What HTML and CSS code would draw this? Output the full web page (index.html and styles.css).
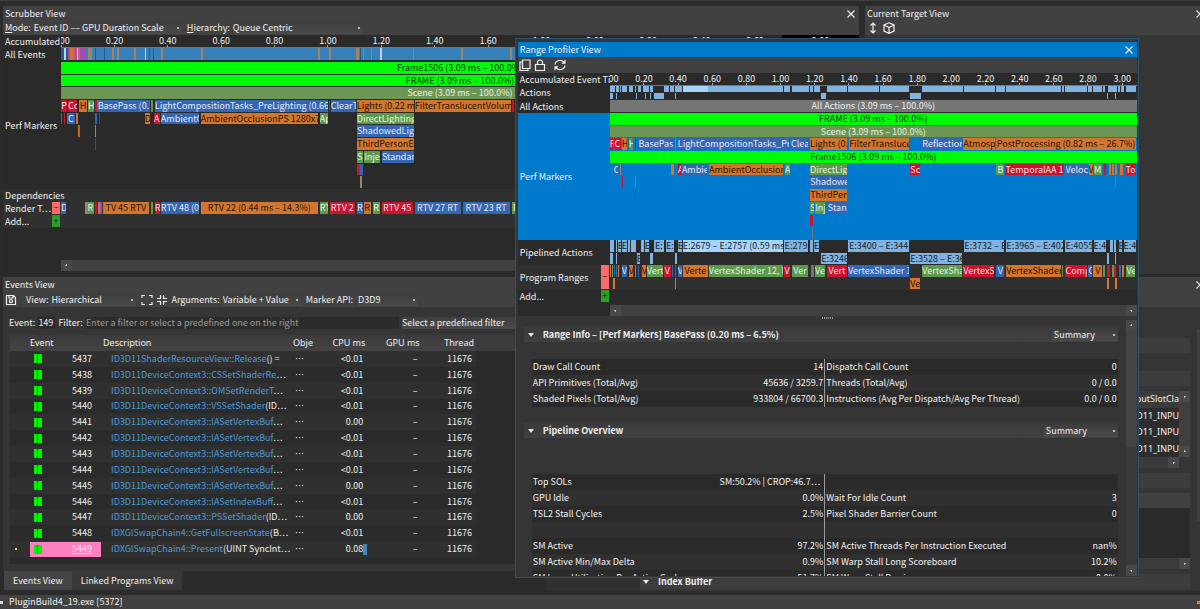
FILE: index.html
```html
<!DOCTYPE html>
<html lang="en">
  <head>
    <meta charset="UTF-8" />
    <meta name="viewport" content="width=device-width, initial-scale=1.0" />
    <title>PluginBuild4_19.exe [5372]</title>
    <link rel="stylesheet" href="styles.css">
  </head>
  <body>
    <main class="workspace">
      <div class="dock dock-top">
        <section class="panel scrubber">
          <header class="panel-head">
            <div class="panel-title">
              <h2>Scrubber View</h2>
              <button class="close" aria-label="Close Scrubber View"><svg viewBox="0 0 8 8"><path d="M.5.5l7 7M7.5.5l-7 7" /></svg></button>
            </div>
            <div class="toolbar">
              <label for="mode"><u>M</u>ode:</label>
              <select id="mode" class="w-mode"><option>Event ID –– GPU Duration Scale</option></select>
              <label for="hierarchy"><u>H</u>ierarchy:</label>
              <select id="hierarchy" class="w-hierarchy"><option>Queue Centric</option></select>
            </div>
          </header>
          <div class="lane ruler-lane">
            <span class="lane-label">Accumulated D</span>
            <div class="ruler" id="scrubRuler"></div>
          </div>
          <div class="lane all-events">
            <span class="lane-label">All Events</span>
            <div class="track" id="allEvents"></div>
          </div>
          <div class="lane perf">
            <span class="lane-label">Perf Markers</span>
            <div class="track" id="scrubPerf"></div>
          </div>
          <div class="lane lane-alt"><span class="lane-label wide">Dependencies</span></div>
          <div class="lane lane-alt">
            <span class="lane-label">Render T⋯</span>
            <button class="remove" aria-label="Remove row">−</button>
            <div class="track" id="renderTargets"></div>
          </div>
          <div class="lane lane-alt">
            <span class="lane-label">Add...</span>
            <button class="add" aria-label="Add row">+</button>
            <div class="track"></div>
          </div>
          <div class="hscroll"><i></i></div>
        </section>

        <section class="panel target">
          <header class="panel-head">
            <div class="panel-title">
              <h2>Current Target View</h2>
              <button class="close cut" aria-label="Close Current Target View"><svg viewBox="0 0 8 8"><path d="M.5.5l7 7M7.5.5l-7 7" /></svg></button>
            </div>
            <div class="toolbar icons">
              <svg class="icon" viewBox="0 0 12 12"><path d="M6 1v10M3.500 3.500L6 1l2.500 2.500M3.500 8.500L6 11l2.500-2.500" /></svg>
              <svg class="icon" viewBox="0 0 12 12"><path d="M6 .8l5 2.200v6L6 11.300 1 9V3zM1 3l5 2.500L11 3M6 5.500v5.800" /></svg>
            </div>
          </header>
        </section>
      </div>

      <div class="dock dock-bottom">
        <div class="events-side">
          <section class="panel events">
            <header class="panel-head">
              <div class="panel-title"><h2>Events View</h2></div>
              <div class="toolbar">
                <svg class="icon" viewBox="0 0 12 12"><path d="M1.500 1.500h7l2 2v7h-9zM4 1.500v2.500h4V2M6 5.500a1.500 1.500 0 1 1 0 3.200a1.500 1.500 0 1 1 0-3.200" /></svg>
                <label for="view" class="indent">View:</label>
                <select id="view" class="w-view"><option>Hierarchical</option></select>
                <svg class="icon" viewBox="0 0 12 12"><path d="M1 4V1.500h3M8 1.500h3V4M11 8v2.500H8M4 10.500H1V8" /></svg>
                <svg class="icon" viewBox="0 0 12 12"><path d="M1 4.500h3.500V1M7.500 1v3.500H11M11 7.500H7.500V11M4.500 11V7.500H1" /></svg>
                <label for="args">Arguments:</label>
                <select id="args" class="w-args"><option>Variable + Value</option></select>
                <label for="api">Marker API:</label>
                <select id="api" class="w-api"><option>D3D9</option></select>
              </div>
            </header>
            <div class="filter-bar">
              <label for="eventNo">Event:</label>
              <input id="eventNo" class="event-no" value="149" />
              <label for="filter">Filter:</label>
              <input id="filter" class="filter" placeholder="Enter a filter or select a predefined one on the right" />
              <select class="w-filter" aria-label="Predefined filter"><option>Select a predefined filter</option></select>
            </div>
            <div class="event-list">
              <table class="event-table">
                <thead>
                  <tr>
                    <th class="c-mark"></th>
                    <th class="c-event">Event</th>
                    <th class="c-desc">Description</th>
                    <th class="c-obj">Obje</th>
                    <th class="c-num">CPU ms</th>
                    <th class="c-num">GPU ms</th>
                    <th class="c-num">Thread</th>
                  </tr>
                </thead>
                <tbody id="eventRows"></tbody>
              </table>
            </div>
          </section>
          <nav class="tabs">
            <button class="tab active">Events View</button>
            <button class="tab">Linked Programs View</button>
          </nav>
        </div>

        <section class="panel inspector">
          <header class="panel-head">
            <div class="panel-title">
              <h2></h2>
              <button class="close cut" aria-label="Close API Inspector"><svg viewBox="0 0 8 8"><path d="M.5.5l7 7M7.5.5l-7 7" /></svg></button>
            </div>
          </header>
          <div class="inspector-body">
            <div class="stage-list"></div>
            <div class="stage">
              <div class="group"></div>
              <div class="group"></div>
              <div class="layout-box">
                <table class="slots">
                  <tr><th>InputSlotCla</th></tr>
                  <tr><td>D3D11_INPU</td></tr>
                  <tr><td>D3D11_INPU</td></tr>
                  <tr><td>D3D11_INPU</td></tr>
                </table>
                <div class="vscroll ends"><i></i><i></i></div>
              </div>
              <div class="hscroll-mini"></div>
              <div class="group"></div>
              <div class="buffer-head"></div>
              <div class="buffer-body"></div>
              <div class="hscroll-mini full"></div>
              <button class="group index-buffer"><i class="caret"></i>Index Buffer</button>
            </div>
            <div class="vscroll outer"></div>
          </div>
        </section>
      </div>
    </main>

    <footer class="status">
      <i class="status-dot"></i>
      <span>PluginBuild4_19.exe [5372]</span>
      <i class="status-warn"></i>
    </footer>

    <section class="window">
      <header class="window-title">
        <h2>Range Profiler View</h2>
        <button class="close" aria-label="Close Range Profiler View"><svg viewBox="0 0 8 8"><path d="M.5.5l7 7M7.5.5l-7 7" /></svg></button>
      </header>
      <div class="window-tools">
        <svg class="icon" viewBox="0 0 12 12"><path d="M3.500 1h7.500v8.500H3.500zM3.500 3H1v8.500h8V9.500" /></svg>
        <svg class="icon" viewBox="0 0 12 12"><path d="M1.500 5.500h9v6h-9zM3.500 5.500V3.500a2.500 2.500 0 0 1 5 0v2" /></svg>
        <svg class="icon gap" viewBox="0 0 12 12"><path d="M1 5.500a5 4.500 0 0 1 9.500-1.500M11 1v3.200H7.800M11 6.500A5 4.500 0 0 1 1.500 8M1 11V7.800h3.200" /></svg>
      </div>
      <div class="profile">
        <div class="lane ruler-lane">
          <span class="lane-label">Accumulated Event Ti</span>
          <div class="ruler" id="rangeRuler"></div>
        </div>
        <div class="lane actions">
          <span class="lane-label">Actions</span>
          <div class="track" id="actions"></div>
        </div>
        <div class="lane">
          <span class="lane-label">All Actions</span>
          <div class="track" id="allActions"></div>
        </div>
        <div class="lane perf selected">
          <span class="lane-label">Perf Markers</span>
          <div class="track" id="rangePerf"></div>
        </div>
        <div class="lane double">
          <span class="lane-label">Pipelined Actions</span>
          <div class="track" id="pipelined"></div>
        </div>
        <div class="lane double lane-alt">
          <span class="lane-label">Program Ranges</span>
          <button class="remove" aria-label="Remove row">−</button>
          <div class="track" id="programs"></div>
        </div>
        <div class="lane">
          <span class="lane-label">Add...</span>
          <button class="add" aria-label="Add row">+</button>
          <div class="track"></div>
        </div>
        <div class="hscroll"><i></i><i></i></div>
      </div>
      <div class="splitter"></div>
      <div class="details">
        <div class="details-body">
          <div class="section-head">
            <button class="fold"><i class="caret"></i>Range Info – [Perf Markers] BasePass (0.20 ms – 6.5%)</button>
            <select class="w-range" aria-label="Range info view"><option>Summary</option></select>
          </div>
          <table class="metrics">
            <tr><td>Draw Call Count</td><td>14</td><td>Dispatch Call Count</td><td>0</td></tr>
            <tr><td>API Primitives (Total/Avg)</td><td>45636 / 3259.7</td><td>Threads (Total/Avg)</td><td>0 / 0.0</td></tr>
            <tr><td>Shaded Pixels (Total/Avg)</td><td>933804 / 66700.3</td><td>Instructions (Avg Per Dispatch/Avg Per Thread)</td><td>0.0 / 0.0</td></tr>
          </table>
          <div class="section-head">
            <button class="fold"><i class="caret"></i>Pipeline Overview</button>
            <select class="w-pipeline" aria-label="Pipeline overview view"><option>Summary</option></select>
          </div>
          <table class="metrics pipeline">
            <tr><td>Top SOLs</td><td class="more">SM:50.2% | CROP:46.7⋯</td><td></td><td></td></tr>
            <tr><td>GPU Idle</td><td>0.0%</td><td>Wait For Idle Count</td><td>3</td></tr>
            <tr><td>TSL2 Stall Cycles</td><td>2.5%</td><td>Pixel Shader Barrier Count</td><td>0</td></tr>
            <tr><td></td><td></td><td></td><td></td></tr>
            <tr><td>SM Active</td><td>97.2%</td><td>SM Active Threads Per Instruction Executed</td><td>nan%</td></tr>
            <tr><td>SM Active Min/Max Delta</td><td>0.9%</td><td>SM Warp Stall Long Scoreboard</td><td>10.2%</td></tr>
            <tr><td>SM Issue Utilization Per Active Cycle</td><td>51.7%</td><td>SM Warp Stall Barrier</td><td>0.0%</td></tr>
          </table>
        </div>
        <div class="vscroll window-scroll ends"><i></i><i></i></div>
      </div>
    </section>

    <script src="script.js"></script>
  </body>
</html>
```
FILE: styles.css
```css
* {
  box-sizing: border-box;
}

body {
  margin: 0;
  height: 100vh;
  display: flex;
  flex-direction: column;
  position: relative;
  overflow: hidden;
  background: #2b2b2b;
  color: #f0f0f0;
  font: 9px/12px "Noto Sans CJK JP", sans-serif;
  white-space: nowrap;
}

h2 {
  margin: 0;
  font-size: 9px;
  font-weight: normal;
}

button,
input,
select {
  margin: 0;
  padding: 0;
  border: 0;
  border-radius: 0;
  background: none;
  color: inherit;
  font: inherit;
}

select {
  appearance: none;
  height: 12px;
  padding: 0;
  background: radial-gradient(#bbb 1px, transparent 1px) right 2px center / 4px 4px no-repeat,
    linear-gradient(#3e3e3e, #4a4a4a);
}

svg {
  display: block;
  fill: none;
  stroke: #f0f0f0;
  stroke-width: 1.2;
}

.icon {
  width: 12px;
  height: 12px;
  flex: none;
}

.close svg {
  width: 8px;
  height: 8px;
}

.workspace {
  flex: 1;
  min-height: 0;
  display: flex;
  flex-direction: column;
  gap: 3px;
  padding: 5px 0 0 3px;
  border-top: 1px solid #3e3e3e;
}

.dock {
  display: flex;
}

.dock-top {
  height: 268px;
  gap: 6px;
}

.dock-bottom {
  flex: 1;
  min-height: 0;
  gap: 6px;
}

.panel {
  min-width: 0;
  background: #353535;
}

.panel-head {
  flex: none;
  background: #414141;
  height: 30px;
}

.dock-top .panel-head {
  height: 29px;
}

.panel-title {
  display: flex;
  justify-content: space-between;
  align-items: center;
  height: 15px;
  padding: 0 4px 0 2px;
}

.close.cut {
  margin-right: -8px;
}

.toolbar {
  display: flex;
  align-items: center;
  height: 14px;
  padding-left: 2px;
  gap: 3px;
}

.scrubber {
  flex: 856;
  display: flex;
  flex-direction: column;
  background: #2a2a2a;
}

.target {
  flex: 335;
  overflow: hidden;
}

.target .toolbar {
  gap: 4px;
}

.w-mode {
  width: 148px;
  margin-right: 2px;
}

.w-hierarchy {
  width: 130px;
}

/* timelines */
.lane {
  display: flex;
  align-items: stretch;
  height: 13px;
}

.lane-label {
  width: 58px;
  flex: none;
  padding-left: 2px;
  align-self: center;
  overflow: hidden;
}

.lane-label.wide {
  width: auto;
}

.lane-alt {
  background: #303030;
}

.lane .remove,
.lane .add {
  width: 8px;
  flex: none;
  margin: 0 1px 1px -9px;
  line-height: 10px;
  color: #1c1c1c;
}

.lane .remove {
  background: #ff6b6b;
}

.lane .add {
  background: #2aa02a;
}

.track {
  flex: 1;
  min-width: 0;
  display: grid;
  grid-auto-rows: 1fr;
}

.row {
  display: flex;
  min-width: 0;
  overflow: hidden;
  padding-bottom: 1px;
}

.bar {
  flex: none;
  overflow: hidden;
  text-align: center;
  line-height: 12px;
}

.red { background: #cb1530; color: #f6dfe2; }
.blue { background: #3566b3; color: #e2e9f5; }
.orange { background: #d3752d; color: #2a1608; }
.green { background: #5c994d; color: #e6f2e2; }
.lime { background: #00fb06; color: #063c06; }
.scene { background: #6b9653; color: #eef3ea; }
.gray { background: #757575; color: #f0f0f0; }
.sky { background: #80b3e0; color: #152433; }
.light { background: #a8d4fa; color: #152433; }
.steel { background: #3880ba; }
.tan { background: #a08463; }
.pink { background: #d05a70; }
.violet { background: #a24bb5; }
.white { background: #b8d3ea; }
.navy { background: #275b87; }

.ruler {
  flex: 1;
  min-width: 0;
  display: flex;
  overflow: hidden;
  border-bottom: 1px solid #777;
}

.tick {
  flex: none;
  text-align: center;
  line-height: 12px;
  background: linear-gradient(#aaa, #aaa) center bottom / 1px 2px no-repeat;
}

.tick.cursor {
  flex: 1;
  background: #000;
}

.all-events {
  height: 14px;
  padding-bottom: 1px;
}

.scrubber .perf,
.profile .perf {
  height: 127px;
}

.hscroll {
  height: 11px;
  margin: auto 0 3px 58px;
  display: flex;
  justify-content: space-between;
  background: #404040;
}

.hscroll i,
.vscroll i {
  width: 11px;
  height: 11px;
  background: radial-gradient(#bbb 1px, #484848 1px);
}

/* events */
.events-side {
  flex: 537;
  min-width: 0;
  display: flex;
  flex-direction: column;
}

.events {
  flex: 1;
  min-height: 0;
  display: flex;
  flex-direction: column;
}

.events .toolbar {
  height: 15px;
}

.toolbar .indent {
  margin-left: 6px;
}

.w-view {
  width: 85px;
}

.toolbar .w-view + .icon {
  margin-left: 2px;
}

.w-args {
  width: 78px;
  margin-right: 2px;
}

.w-api {
  width: 60px;
  margin-left: 2px;
}

.filter-bar {
  display: flex;
  align-items: center;
  gap: 3px;
  height: 12px;
  margin: 10px 0 6px;
  padding-left: 6px;
}

.filter-bar input {
  height: 12px;
  background: #2b2b2b;
}

.event-no {
  width: 17px;
}

.filter-bar .filter {
  width: 313px;
}

.filter::placeholder {
  color: #9a9a9a;
}

.w-filter {
  flex: 1;
}

.event-list {
  flex: 1;
  margin: 0 0 7px 7px;
  background: linear-gradient(#3c3c3c 16px, #2b2b2b 16px);
}

.event-table {
  width: 466px;
  height: 222px;
  table-layout: fixed;
  border-collapse: collapse;
}

.event-table th,
.event-table td {
  padding: 0;
  overflow: hidden;
}

.event-table th {
  height: 16px;
  font: 9px/14px "Noto Sans", sans-serif;
  text-align: left;
  background: linear-gradient(#3b3b3b, #444);
}

.event-table .c-mark { width: 20px; }
.event-table .c-event { width: 73px; }
.event-table .c-desc { width: 190px; }
.event-table .c-obj { width: 20px; }
.event-table .c-num { text-align: right; }
.event-table th.c-num { padding-right: 2px; }

.event-table tbody tr:nth-child(odd) {
  background: #303030;
}

.event-table .num,
.event-table .thread {
  padding-right: 4px;
  text-align: right;
}

.event-cell {
  display: flex;
  align-items: center;
  gap: 30px;
  width: 71px;
  height: 15px;
  padding-left: 4px;
}

.swatch {
  width: 8px;
  height: 9px;
  background: linear-gradient(90deg, #00f400 3px, #087a08 3px 4px, #00f400 4px);
}

.event-table .desc {
  padding-left: 8px;
}

.desc a {
  color: #4c9bd9;
  text-decoration: none;
}

.current .event-cell {
  background: #ff80c0;
}

.current .event-cell span {
  text-decoration: underline;
  color: #ffe4f2;
}

.current .marker {
  background: radial-gradient(#e8e04c 1px, transparent 1px) left 4px center / 4px 4px no-repeat;
}

.current .cpu {
  background: linear-gradient(#3f86c6, #3f86c6) right 0 center / 4px 11px no-repeat;
}

.tabs {
  display: flex;
  height: 19px;
  margin: 0 0 5px 1px;
}

.tab {
  padding: 0 9px;
  background: #383838;
}

.tab.active {
  background: #444;
}

/* inspector */
.inspector {
  flex: 654;
  display: flex;
  flex-direction: column;
  overflow: hidden;
  margin-bottom: 4px;
}

.inspector-body {
  flex: 1;
  min-height: 0;
  display: flex;
}

.stage-list {
  width: 94px;
  background: #303030;
}

.stage {
  flex: 1;
  min-width: 0;
  display: flex;
  flex-direction: column;
  padding-top: 31px;
}

.stage > * {
  flex: none;
}

.group {
  height: 15px;
  margin-bottom: 18px;
  background: #3d3d3d;
}

.group + .layout-box {
  margin-top: -13px;
}

.layout-box {
  display: flex;
  height: 66px;
  background: #2d2d2d;
}

.slots {
  flex: 1;
  border-collapse: collapse;
  font: 9px/14px "Noto Sans", sans-serif;
}

.slots th {
  font-weight: normal;
  background: #3b3b3b;
}

.slots td,
.slots th {
  padding: 1px 0;
  text-align: right;
}

.vscroll {
  width: 11px;
  background: #404040;
}

.ends {
  display: flex;
  flex-direction: column;
  justify-content: space-between;
}

.hscroll-mini {
  height: 11px;
  margin: 0 11px 5px 0;
  background: radial-gradient(#bbb 1px, #484848 1px) right / 11px 11px no-repeat, #3b3b3b;
}

.hscroll-mini.full {
  margin-right: 0;
}

.hscroll-mini + .group {
  margin-bottom: 5px;
}

.buffer-head {
  height: 15px;
  background: #404040;
}

.buffer-body {
  height: 50px;
  background: #2a2a2a;
}

.index-buffer {
  display: flex;
  align-items: center;
  gap: 9px;
  padding-left: 3px;
  font-weight: bold;
}

.outer {
  width: 3px;
  margin: 22px 0 70px 7px;
}

.caret {
  border: 3px solid transparent;
  border-top: 4px solid #e8e8e8;
  border-bottom: 0;
}

.status {
  height: 14px;
  flex: none;
  display: flex;
  align-items: center;
  gap: 6px;
  background: #414141;
}

.status-dot {
  width: 3px;
  height: 3px;
  background: #ddd;
}

.status-warn {
  width: 3px;
  height: 3px;
  margin-left: auto;
  background: #e87b1e;
}

/* floating range profiler */
.window {
  position: absolute;
  left: 42.9%;
  right: 5.1%;
  top: 38px;
  bottom: 31px;
  display: flex;
  flex-direction: column;
  padding: 3px 1px 1px 2px;
  border: 1px solid #28516e;
  background: #353535;
}

.window-title {
  display: flex;
  justify-content: space-between;
  align-items: center;
  height: 15px;
  flex: none;
  padding: 0 4px 0 2px;
  background: #007acc;
}

.window-tools {
  display: flex;
  align-items: center;
  gap: 3px;
  height: 16px;
  flex: none;
  padding-left: 1px;
  background: #414141;
}

.window-tools .gap {
  margin-left: 5px;
}

.profile {
  background: #2a2a2a;
}

.profile .lane-label {
  width: 92px;
}

.profile .double {
  height: 25px;
}

.profile .actions {
  height: 14px;
}

.profile .selected {
  background: #007acc;
}

.profile .hscroll {
  margin: 2px 0 0 92px;
}

.splitter {
  height: 4px;
  flex: none;
  background: repeating-linear-gradient(90deg, #999 0 1px, transparent 1px 2px) center / 11px 2px no-repeat;
}

.details {
  flex: 1;
  min-height: 0;
  display: flex;
  overflow: hidden;
}

.details-body {
  flex: 1;
  min-width: 0;
  padding: 7px 8px 0 6px;
}

.section-head {
  display: flex;
  justify-content: space-between;
  align-items: center;
  height: 15px;
  margin-bottom: 17px;
  padding-left: 4px;
  background: linear-gradient(#3b3b3b, #404040);
}

.fold {
  display: flex;
  align-items: center;
  gap: 9px;
  font-weight: bold;
}

.w-range,
.w-pipeline {
  width: 66px;
  padding-left: 2px;
}

.w-pipeline {
  width: 74px;
}

.metrics {
  width: calc(100% - 8px);
  margin: 0 0 16px 8px;
  table-layout: fixed;
  border-collapse: collapse;
}

.metrics.pipeline {
  margin-top: 36px;
}

.metrics tr {
  height: 16px;
}

.metrics tr:nth-child(odd) {
  background: #2a2a2a;
}

.metrics tr:nth-child(even) {
  background: #303030;
}

.metrics td {
  padding: 0 1px;
}

.metrics td:nth-child(odd) {
  width: 30%;
}

.metrics td:nth-child(even) {
  width: 20%;
  text-align: right;
}

.metrics td:nth-child(3) {
  width: 35%;
}

.metrics td:nth-child(4) {
  width: 15%;
}

.metrics td:nth-child(2) {
  border-right: 1px solid #999;
}

.metrics .more {
  padding-right: 4px;
}

.window-scroll {
  background: linear-gradient(#444 127px, #3a3a3a 127px);
}
```
FILE: script.js
```js
// bar: [start, end, colour, label], in track units
const SCRUB = 798
const RANGE = 526

function fillTrack(id, total, rows) {
  const track = document.getElementById(id)
  rows.forEach((bars) => {
    const row = document.createElement("div")
    row.className = "row"
    let at = 0
    bars.forEach(([start, end, colour, label]) => {
      const bar = document.createElement("span")
      bar.className = "bar " + colour
      bar.style.marginLeft = ((start - at) / total) * 100 + "%"
      bar.style.width = ((end - start) / total) * 100 + "%"
      bar.textContent = label || ""
      row.appendChild(bar)
      at = end
    })
    track.appendChild(row)
  })
}

function fillRuler(id, total, step, count, cursor) {
  const ruler = document.getElementById(id)
  for (let i = 0; i < count; i++) {
    const tick = document.createElement("span")
    tick.className = "tick"
    tick.style.width = (step / total) * 100 + "%"
    if (i === 0) tick.style.marginLeft = (-step / 2 / total) * 100 + "%"
    if (i === cursor) tick.className += " cursor"
    tick.textContent = (i * 0.2).toFixed(2)
    ruler.appendChild(tick)
  }
}

fillRuler("scrubRuler", SCRUB, 53.4, 15, 14)
fillRuler("rangeRuler", RANGE, 34.1, 16)

fillTrack("allEvents", SCRUB, [[
  [0, 3, "navy"], [3, 5, "white"], [5, 7, "navy"], [7, 9, "violet"], [9, 12, "orange"], [12, 14, "pink"],
  [14, 16, "violet"], [16, 17, "white"], [17, 19, "pink"], [19, 24, "violet"], [24, 27, "steel"],
  [27, 31, "tan"], [31, 34, "steel"], [34, 35, "navy"], [35, 43, "steel"], [43, 44, "navy"],
  [44, 51, "steel"], [51, 53, "tan"], [53, 56, "steel"], [56, 58, "tan"], [58, 73, "steel"],
  [73, 75, "tan"], [75, 84, "steel"], [84, 85, "white"], [85, 88, "steel"], [88, 89, "navy"],
  [89, 92, "steel"], [92, 93, "navy"], [93, 100, "steel"], [100, 102, "tan"], [102, 140, "steel"],
  [140, 142, "tan"], [142, 257, "steel"], [257, 259, "tan"], [259, 268, "steel"], [268, 270, "tan"],
  [270, 295, "steel"], [295, 298, "tan"], [298, 299, "steel"], [299, 300, "navy"], [300, 302, "steel"],
  [302, 304, "tan"], [304, 311, "steel"], [311, 312, "tan"], [312, 320, "steel"], [320, 322, "white"],
  [322, 353, "steel"], [353, 354, "tan"], [354, 401, "steel"], [401, 403, "tan"], [403, 450, "steel"],
  [450, 452, "tan"], [452, 798, "steel"],
]])

fillTrack("scrubPerf", SCRUB, [
  [[0, 798, "lime", "Frame1506 (3.09 ms – 100.0%)"]],
  [[0, 798, "lime", "FRAME (3.09 ms – 100.0%)"]],
  [[0, 798, "scene", "Scene (3.09 ms – 100.0%)"]],
  [
    [0, 6, "red", "P"], [7, 16, "red", "Co"], [18, 26, "orange", "H"], [27, 33, "green", "H"],
    [34, 36, "red"], [36, 89, "blue", "BasePass (0."], [90, 92, "green"],
    [94, 267, "blue", "LightCompositionTasks_PreLighting (0.66 ms"], [268, 269, "red"],
    [270, 295, "blue", "ClearT"], [296, 353, "orange", "Lights (0.22 m"],
    [354, 450, "orange", "FilterTranslucentVolume"], [451, 453, "red"],
  ],
  [
    [0, 1, "blue"], [3, 4, "red"], [6, 14, "blue", "C"], [15, 17, "orange"], [34, 36, "blue"],
    [38, 39, "red"], [84, 89, "orange", "D"], [93, 99, "red", "A"], [100, 138, "blue", "AmbientO"],
    [140, 257, "orange", "AmbientOcclusionPS 1280x7"], [259, 267, "green", "Ap"],
    [296, 353, "green", "DirectLighting"],
  ],
  [[17, 18, "orange"], [18, 19, "steel"], [34, 35, "orange"], [296, 353, "blue", "ShadowedLigh"]],
  [[34, 35, "red"], [296, 353, "orange", "ThirdPersonEx"]],
  [[296, 302, "green", "S"], [303, 319, "green", "Inje"], [321, 353, "blue", "Standar"]],
  [[296, 299, "red"], [299, 302, "blue"]],
  [[299, 301, "tan"]],
])

fillTrack("renderTargets", SCRUB, [[
  [0, 5, "blue", "D"], [24, 26, "tan"], [26, 33, "green", "R"], [34, 36, "red"], [37, 39, "tan"],
  [39, 41, "violet"], [42, 88, "orange", "TV 45 RTV"], [90, 92, "green"], [94, 99, "red", "R"],
  [100, 138, "blue", "RTV 48 (0"], [140, 257, "orange", "RTV 22 (0.44 ms – 14.3%)"],
  [259, 267, "green", "RT"], [269, 294, "red", "RTV 2"], [296, 302, "blue", "R"],
  [303, 310, "orange", "R"], [312, 319, "green", "R"], [321, 352, "red", "RTV 45"],
  [354, 400, "blue", "RTV 27 RT"], [402, 449, "blue", "RTV 23 RT"], [451, 470, "green", "RTV"],
]])

fillTrack("actions", RANGE, [
  [
    [0, 5, "sky"], [6, 9, "sky"], [10, 11, "sky"], [12, 17, "sky"], [19, 23, "sky"], [25, 26, "sky"],
    [28, 31, "sky"], [33, 39, "sky"], [40, 43, "sky"], [54, 59, "sky"], [60, 64, "sky"],
    [65, 72, "sky"], [73, 98, "light"], [98, 173, "sky"], [174, 180, "sky"], [182, 199, "sky"],
    [200, 203, "sky"], [204, 210, "sky"], [217, 237, "sky"], [238, 269, "sky"], [270, 299, "sky"],
    [312, 353, "sky"], [354, 385, "sky"], [386, 395, "sky"], [396, 451, "sky"], [452, 454, "sky"],
    [455, 477, "sky"], [478, 482, "sky"], [483, 492, "sky"], [493, 495, "sky"], [498, 507, "sky"],
    [508, 510, "sky"], [511, 514, "sky"], [516, 526, "sky"],
  ],
  [
    [0, 3, "sky"], [6, 7, "sky"], [26, 27, "sky"], [35, 36, "sky"], [40, 41, "sky"], [44, 54, "sky"],
    [65, 66, "sky"], [211, 216, "sky"], [300, 311, "sky"], [496, 497, "sky"], [504, 505, "sky"],
  ],
])

fillTrack("allActions", RANGE, [[[0, 526, "gray", "All Actions (3.09 ms – 100.0%)"]]])

fillTrack("rangePerf", RANGE, [
  [[0, 526, "lime", "FRAME (3.09 ms – 100.0%)"]],
  [[0, 526, "scene", "Scene (3.09 ms – 100.0%)"]],
  [
    [0, 3, "red", "P"], [4, 11, "red", "C"], [12, 17, "orange", "H"], [19, 23, "green", "H"],
    [25, 26, "red"], [28, 64, "blue", "BasePas"], [65, 66, "green"],
    [68, 179, "blue", "LightCompositionTasks_Pre"], [181, 198, "blue", "Clea"],
    [200, 237, "orange", "Lights (0."], [239, 299, "orange", "FilterTransluce"],
    [312, 352, "blue", "Reflection"], [353, 385, "orange", "Atmosp"],
    [386, 525, "orange", "PostProcessing (0.82 ms – 26.7%)"],
  ],
  [[0, 526, "lime", "Frame1506 (3.09 ms – 100.0%)"]],
  [
    [4, 8, "blue", "C"], [10, 11, "tan"], [61, 64, "orange"], [68, 71, "red", "A"],
    [72, 97, "blue", "Ambie"], [99, 173, "orange", "AmbientOcclusionP"], [175, 180, "green", "A"],
    [200, 237, "green", "DirectLig"], [300, 310, "red", "Sc"], [386, 394, "green", "B"],
    [395, 453, "red", "TemporalAA 1"], [455, 477, "blue", "Veloc"], [478, 482, "orange", "V"],
    [483, 491, "green", "M"], [493, 495, "red"], [498, 500, "orange"], [501, 503, "orange"],
    [504, 506, "orange"], [509, 512, "orange"], [515, 525, "red", "To"],
  ],
  [[12, 13, "red"], [25, 26, "green"], [200, 237, "blue", "Shadowe"], [496, 497, "blue"], [504, 505, "gray"]],
  [[25, 26, "red"], [200, 237, "orange", "ThirdPers"]],
  [[200, 204, "green", "S"], [205, 215, "green", "Inj"], [217, 237, "blue", "Stan"]],
  [[200, 203, "red"]],
  [[202, 203, "gray"]],
])

fillTrack("pipelined", RANGE, [
  [
    [0, 4, "sky"], [6, 7, "sky"], [8, 11, "sky", "E"], [12, 17, "sky", "E"], [18, 20, "sky"],
    [21, 26, "sky"], [31, 34, "sky"], [35, 39, "sky", "E"], [44, 54, "sky", "E:"],
    [56, 64, "sky", "E:"], [68, 72, "sky", "E"], [73, 173, "light", "E:2679 – E:2757 (0.59 ms"],
    [174, 198, "sky", "E:279"], [200, 203, "sky"], [204, 209, "sky", "E"],
    [238, 299, "sky", "E:3400 – E:344"], [354, 394, "sky", "E:3732 – E"],
    [396, 453, "sky", "E:3965 – E:402"], [455, 481, "sky", "E:4055"], [483, 495, "sky", "E:4"],
    [499, 502, "sky"], [503, 505, "sky"], [508, 511, "sky", "E"], [513, 525, "sky", "E:4"],
  ],
  [
    [0, 3, "sky"], [6, 7, "sky"], [27, 30, "sky", "E"], [40, 43, "sky"], [65, 67, "sky"],
    [211, 237, "sky", "E:3246"], [300, 352, "sky", "E:3528 – E:36"], [496, 498, "sky"],
    [504, 505, "sky"],
  ],
])

fillTrack("programs", RANGE, [
  [
    [0, 1, "orange"], [2, 3, "green"], [4, 5, "blue"], [6, 7, "blue"], [8, 9, "orange"],
    [12, 17, "blue", "V"], [19, 23, "orange", "V"], [25, 26, "orange"], [28, 29, "blue"],
    [32, 36, "orange", "V"], [37, 53, "green", "Vert"], [54, 61, "red", "V"], [62, 63, "blue"],
    [65, 66, "blue"], [68, 72, "blue", "V"], [73, 98, "orange", "Verte"],
    [99, 173, "green", "VertexShader 12, P"], [174, 180, "red", "V"], [182, 198, "green", "Ver"],
    [201, 204, "gray"], [205, 215, "green", "Ve"], [217, 237, "red", "Vert"],
    [238, 299, "blue", "VertexShader 1"], [312, 352, "green", "VertexSha"],
    [353, 384, "red", "VertexS"], [386, 394, "blue", "V"], [396, 451, "orange", "VertexShader"],
    [452, 453, "green"], [455, 477, "red", "Comp"], [478, 482, "blue", "C"],
    [483, 492, "orange", "V"], [493, 495, "green"], [497, 500, "red"], [502, 504, "green"],
    [504, 506, "red"], [509, 511, "blue"], [512, 514, "orange"], [516, 525, "green", "Ve"],
  ],
  [
    [3, 5, "orange"], [65, 66, "orange"], [300, 310, "orange", "Ve"], [496, 498, "orange"],
    [504, 506, "orange"],
  ],
])

const CTX = "ID3D11DeviceContext3::"
const events = [
  [5437, "ID3D11ShaderResourceView::Release", "() =", "<0.01"],
  [5438, CTX + "CSSetShaderRe", "⋯", "<0.01"],
  [5439, CTX + "OMSetRenderT", "⋯", "<0.01"],
  [5440, CTX + "VSSetShader", "(ID⋯", "<0.01"],
  [5441, CTX + "IASetVertexBuf", "⋯", "0.00"],
  [5442, CTX + "IASetVertexBuf", "⋯", "<0.01"],
  [5443, CTX + "IASetVertexBuf", "⋯", "<0.01"],
  [5444, CTX + "IASetVertexBuf", "⋯", "<0.01"],
  [5445, CTX + "IASetVertexBuf", "⋯", "0.00"],
  [5446, CTX + "IASetIndexBuff", "⋯", "<0.01"],
  [5447, CTX + "PSSetShader", "(ID⋯", "0.00"],
  [5448, "IDXGISwapChain4::GetFullscreenState", "(B⋯", "<0.01"],
  [5449, "IDXGISwapChain4::Present", "(UINT SyncInt⋯", "0.08"],
]

document.getElementById("eventRows").innerHTML = events
  .map(
    ([id, call, rest, cpu]) => `
    <tr class="${id === 5449 ? "current" : ""}">
      <td class="marker"></td>
      <td><div class="event-cell"><i class="swatch"></i><span>${id}</span></div></td>
      <td class="desc"><a href="#${id}">${call}</a>${rest}</td>
      <td>&nbsp;⋯</td>
      <td class="num cpu">${cpu.replace("<", "&lt;")}</td>
      <td class="num">–</td>
      <td class="thread">11676</td>
    </tr>`
  )
  .join("")
```
